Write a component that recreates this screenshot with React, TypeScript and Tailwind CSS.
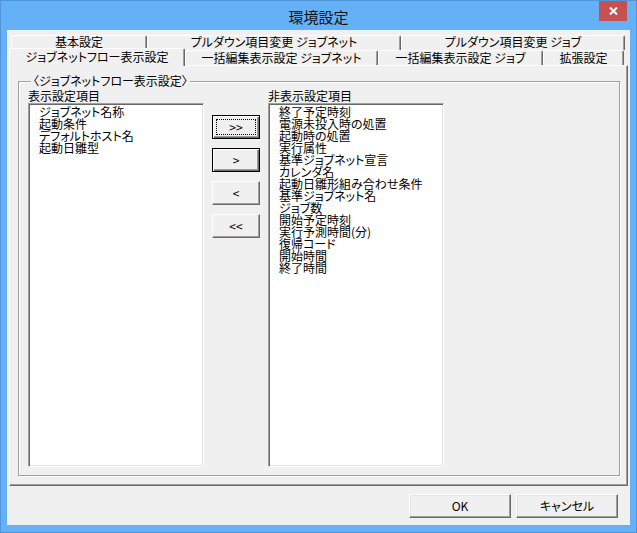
import React from "react"

const uiFont = "font-['Noto_Sans_CJK_JP','Noto_Sans',sans-serif] [font-feature-settings:'palt']"

const row1 = [
  { label: "基本設定", w: "w-[136px]" },
  { label: "プルダウン項目変更 ジョブネット", w: "w-[254px]" },
  { label: "プルダウン項目変更 ジョブ", w: "w-[224px]" },
]

const row2 = [
  { label: "一括編集表示設定 ジョブネット", w: "w-[193px]" },
  { label: "一括編集表示設定 ジョブ", w: "w-[165px]" },
  { label: "拡張設定", w: "w-[81px]" },
]

const shown = ["ジョブネット名称", "起動条件", "デフォルトホスト名", "起動日雛型"]

const hidden = [
  "終了予定時刻",
  "電源未投入時の処置",
  "起動時の処置",
  "実行属性",
  "基準ジョブネット宣言",
  "カレンダ名",
  "起動日雛形組み合わせ条件",
  "基準ジョブネット名",
  "ジョブ数",
  "開始予定時刻",
  "実行予測時間(分)",
  "復帰コード",
  "開始時間",
  "終了時間",
]

function Tab({ label, w, top }: { label: string; w: string; top?: boolean }) {
  return (
    <div
      className={`${w} h-full flex ${
        top ? "items-start" : "items-center"
      } justify-center border-l border-t border-white border-r border-r-[#696969] shadow-[inset_-1px_0_0_#a0a0a0] rounded-t-[2px] bg-[#f0f0f0] text-[12px] leading-[12px] text-black whitespace-nowrap`}
    >
      {label}
    </div>
  )
}

function ListBox({ items }: { items: string[] }) {
  return (
    <div className="w-[176px] h-[364px] bg-white border border-t-[#a0a0a0] border-l-[#a0a0a0] border-b-white border-r-white shadow-[inset_1px_1px_0_#696969,inset_-1px_-1px_0_#e3e3e3] pl-[10px] pt-[2px]">
      {items.map((item) => (
        <div key={item} className="h-[12px] text-[12px] leading-[12px] text-black whitespace-nowrap">
          {item}
        </div>
      ))}
    </div>
  )
}

function MoveButton({ label, isDefault, focused }: { label: string; isDefault?: boolean; focused?: boolean }) {
  if (isDefault) {
    return (
      <div className="w-[48px] h-[24px] border border-black bg-[#f0f0f0] shadow-[inset_1px_1px_0_#ffffff,inset_-1px_-1px_0_#696969,inset_-2px_-2px_0_#a0a0a0] flex p-[3px]">
        <div
          className={`flex-1 flex items-center justify-center text-[12px] leading-[12px] text-black border ${
            focused ? "border-dotted border-black" : "border-transparent"
          }`}
        >
          {label}
        </div>
      </div>
    )
  }
  return (
    <div className="w-[48px] h-[24px] border border-t-white border-l-white border-r-[#696969] border-b-[#696969] shadow-[inset_-1px_-1px_0_#a0a0a0] bg-[#f0f0f0] flex items-center justify-center text-[12px] leading-[12px] text-black">
      {label}
    </div>
  )
}

function DialogButton({ label }: { label: string }) {
  return (
    <div className="w-[102px] h-[24px] border border-t-white border-l-white border-r-[#696969] border-b-[#696969] shadow-[inset_-1px_-1px_0_#a0a0a0,inset_1px_1px_0_#e3e3e3] bg-[#f0f0f0] flex items-center justify-center text-[12px] leading-[12px] text-black">
      {label}
    </div>
  )
}

export default function App() {
  return (
    <div className={`w-[637px] h-[533px] bg-[#65b1f7] border border-[#4f95d8] flex flex-col ${uiFont}`}>
      {/* title bar */}
      <div className="h-[29px] relative flex items-center justify-center shrink-0">
        <span className="text-[15px] leading-[15px] text-[#111] font-['Noto_Sans_CJK_JP',sans-serif] [font-feature-settings:normal] mt-[1px]">
          環境設定
        </span>
        <div className="absolute right-[9px] top-0 w-[28px] h-[20px] bg-[#c75050] flex items-center justify-center">
          <svg width="9" height="8" viewBox="0 0 9 8">
            <path d="M1 0.5 L8 7.5 M8 0.5 L1 7.5" stroke="white" strokeWidth="2" />
          </svg>
        </div>
      </div>

      {/* client area */}
      <div className="ml-[6px] mr-[6px] mb-[7px] flex-1 bg-[#f0f0f0] flex flex-col">
        {/* tab strip */}
        <div className="pt-[5px] pl-[2px] h-[35px] shrink-0 flex flex-col">
          <div className="flex h-[15px] pl-[2px]">
            {row1.map((t) => (
              <Tab key={t.label} {...t} top />
            ))}
          </div>
          <div className="flex h-[15px] items-end relative z-10">
            <div className="w-[176px] h-[18px] relative top-px flex items-start pt-[2px] justify-center border-l border-t border-white border-r border-r-[#696969] shadow-[inset_-1px_0_0_#a0a0a0] rounded-t-[2px] bg-[#f0f0f0] text-[12px] leading-[12px] text-black whitespace-nowrap">
              ジョブネットフロー表示設定
            </div>
            {row2.map((t) => (
              <Tab key={t.label} {...t} />
            ))}
          </div>
        </div>

        {/* tab panel */}
        <div className="ml-[2px] mr-[2px] h-[421px] shrink-0 border border-t-white border-l-white border-r-[#696969] border-b-[#696969] shadow-[inset_-1px_-1px_0_#a0a0a0] pt-[15px] pl-[8px] pr-[7px] pb-[9px]">
          <div className="relative h-full border border-[#a0a0a0] shadow-[inset_1px_1px_0_#ffffff,1px_1px_0_#ffffff] pt-[8px] pl-[9px]">
            <div className="absolute left-[12px] -top-[7px] px-[2px] bg-[#f0f0f0] text-[12px] leading-[12px] text-black whitespace-nowrap">
              〈ジョブネットフロー表示設定〉
            </div>
            <div className="flex gap-[8px]">
              <div className="flex flex-col">
                <div className="h-[13px] text-[12px] leading-[12px] text-black">表示設定項目</div>
                <ListBox items={shown} />
              </div>
              <div className="flex flex-col gap-[9px] pt-[25px]">
                <MoveButton label=">>" isDefault focused />
                <MoveButton label=">" isDefault />
                <MoveButton label="<" />
                <MoveButton label="<<" />
              </div>
              <div className="flex flex-col">
                <div className="h-[13px] text-[12px] leading-[12px] text-black">非表示設定項目</div>
                <ListBox items={hidden} />
              </div>
            </div>
          </div>
        </div>

        {/* dialog buttons */}
        <div className="flex justify-end gap-[5px] pt-[8px] pr-[12px]">
          <DialogButton label="OK" />
          <DialogButton label="キャンセル" />
        </div>
      </div>
    </div>
  )
}
